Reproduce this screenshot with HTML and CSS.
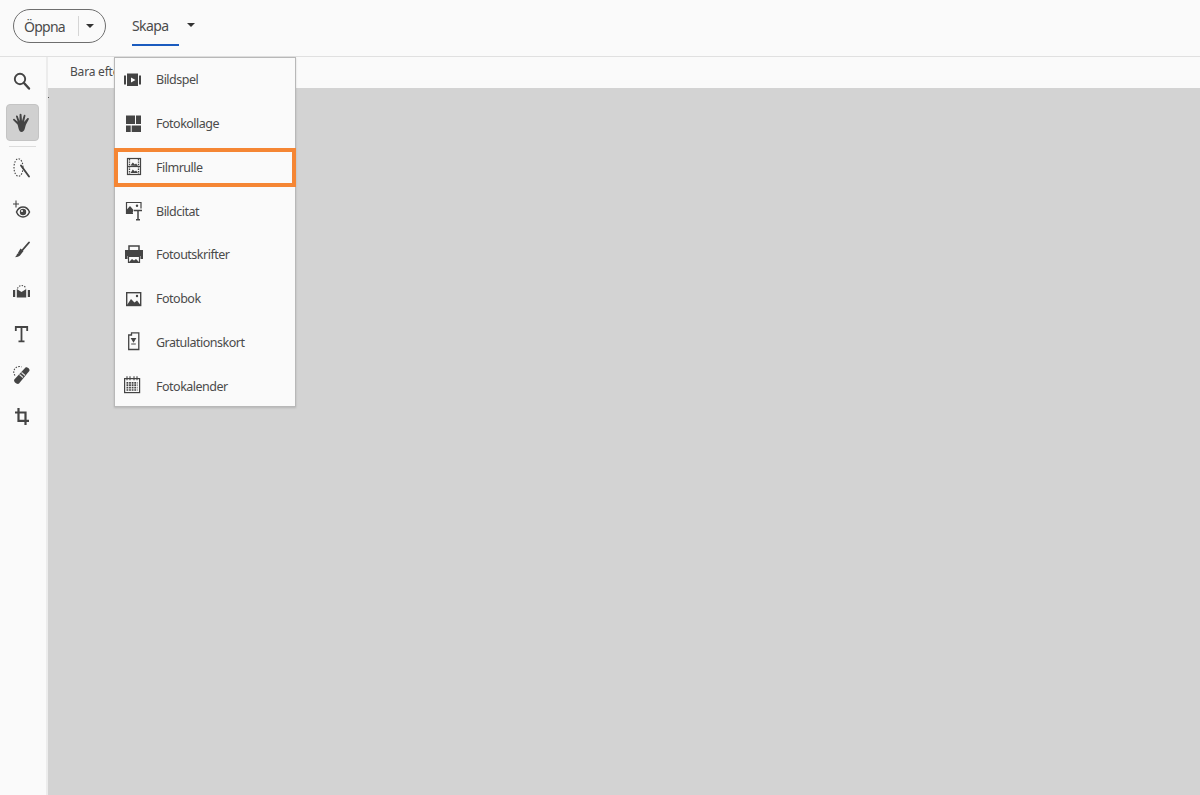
FILE: index.html
```html
<!DOCTYPE html>
<html lang="sv">
<head>
<meta charset="utf-8">
<title>Skapa</title>
<link rel="stylesheet" href="styles.css">
</head>
<body>
<header class="topbar">
  <div class="open-btn"><span class="open-label">Öppna</span><span class="open-sep"></span><span class="caret"></span></div>
  <div class="create-tab"><span class="create-label">Skapa</span></div>
  <span class="caret create-caret"></span>
</header>
<div class="main">
  <nav class="rail">
    <div class="tool"><svg width="20" height="20" viewBox="0 0 20 20"><circle cx="8" cy="8" r="5.2" fill="none" stroke="#444" stroke-width="1.900"/><path d="M12 12L17 17.500" stroke="#444" stroke-width="2.400" stroke-linecap="round"/></svg></div>
    <div class="tool tool-active"><svg width="20" height="20" viewBox="0 0 20 20"><path d="M5.500 11.500L1.300 7.300c-.8-.9.300-2 1.200-1.300l3.200 2.800L4 3.500c-.3-1.200 1.300-1.600 1.700-.4L7.500 8 7.600 1.600c0-1.300 1.800-1.300 1.900 0L10 8l1.700-5.600c.4-1.200 2-.8 1.700.5L12 9l3.300-3.700c.8-.9 2.100.1 1.400 1.100L14 11.500c-1 2-1 7.500-4.500 7.500-2.800 0-3-5-4-7.500z" fill="#444"/></svg></div>
    <div class="rail-sep"></div>
    <div class="tool"><svg width="20" height="20" viewBox="0 0 20 20"><ellipse cx="6.500" cy="9.500" rx="4.500" ry="8.800" fill="none" stroke="#444" stroke-width="1.100" stroke-dasharray="1.500 1.400"/><path d="M9 7.500L17 18.500" stroke="#444" stroke-width="1.900" stroke-linecap="round"/></svg></div>
    <div class="tool"><svg width="20" height="20" viewBox="0 0 20 20"><path d="M4 .5v7M1 4h6" stroke="#444" stroke-width="1.100"/><path d="M4.500 12C6 8.500 8.500 7 11 7s5 1.500 6.500 5c-1.500 3.500-4 5-6.500 5s-5-1.500-6.500-5z" fill="none" stroke="#444" stroke-width="1.500"/><circle cx="11" cy="12" r="3.200" fill="#444"/><circle cx="10" cy="11" r="1" fill="#fff"/></svg></div>
    <div class="tool"><svg width="20" height="20" viewBox="0 0 20 20"><path d="M17 1.500L10.500 9" stroke="#444" stroke-width="1.900" stroke-linecap="round"/><path d="M8.500 7.500l3 2.500-3.500 4.500c-1.200 1.100-3 1.600-4.800 1.700l1-1.700.8-.2-.4-.6 1-1.300.8 0-.4-.7z" fill="#444"/></svg></div>
    <div class="tool"><svg width="20" height="20" viewBox="0 0 20 20"><path d="M5.500 5.500a4.500 4.500 0 0 1 8.500 0" fill="none" stroke="#444" stroke-width="1.100" stroke-dasharray="1.400 1.300"/><path d="M1 7h2.200v7H1zM15.800 7H18v7h-2.200zM4.800 6l4.700 3L14.200 6v8.500H4.800z" fill="#444"/></svg></div>
    <div class="tool"><svg width="20" height="20" viewBox="0 0 20 20"><path d="M3.800 7V3h11.400v4M9.500 3v14M6.500 17.300h6" fill="none" stroke="#444" stroke-width="1.800"/></svg></div>
    <div class="tool"><svg width="20" height="20" viewBox="0 0 20 20"><path d="M3 9.500A5.500 5.500 0 0 1 9.500 1" fill="none" stroke="#444" stroke-width="1.100" stroke-dasharray="1.500 1.300"/><path d="M13.500 1.500c1.500-1.200 5 1.800 3.800 3.500L7 17.500c-1.500 1.500-6-1.500-4.700-4z" fill="#444"/><path d="M7.500 8.500l3.500 3M9.500 6.500l3.500 3" stroke="#ddd" stroke-width="1.200"/></svg></div>
    <div class="tool"><svg width="20" height="20" viewBox="0 0 20 20"><path d="M6.500 1v12.800H17M3 5.500h10.500V18" fill="none" stroke="#444" stroke-width="2.200"/></svg></div>
  </nav>
  <section class="work">
    <div class="subbar"><span class="subbar-text">Bara efter</span></div>
    <div class="canvas"></div>
  </section>
</div>
<span class="speck"></span>
<div class="menu">
  <div class="menu-item"><span class="menu-icon"><svg width="20" height="20" viewBox="0 0 20 20"><path d="M1 5.500h2v9H1zM16 5.500h2v9h-2zM4 3.500h11v12.500H4z" fill="#444"/><path d="M8 7.500l4.500 2.500L8 12.500z" fill="#fff"/></svg></span><span class="menu-label">Bildspel</span></div>
  <div class="menu-item"><span class="menu-icon"><svg width="20" height="20" viewBox="0 0 20 20"><path d="M3 1.500h9V10H3zM13 1.500h5V10h-5zM3 11.500h4.700V18H3zM8.700 11.500H18V18H8.700z" fill="#444"/></svg></span><span class="menu-label">Fotokollage</span></div>
  <div class="menu-item"><span class="menu-icon"><svg width="20" height="20" viewBox="0 0 20 20"><rect x="4.500" y="1.500" width="13" height="16" fill="none" stroke="#444" stroke-width="1.200"/><path d="M6.500 2v15M15.500 2v15" stroke="#444" stroke-width="1.300" stroke-dasharray="1.400 1"/><path d="M4.500 9.500h13" stroke="#444" stroke-width="1.200"/><path d="M7.500 8.500l2.300-3 2 2 1.300-1 1.500 2v.500zM7.500 16l2.300-3.500 2 2 1.300-1 1.500 2v.500z" fill="#444"/></svg></span><span class="menu-label">Filmrulle</span></div>
  <div class="menu-item"><span class="menu-icon"><svg width="20" height="20" viewBox="0 0 20 20"><path d="M10 12.500H3.500V1.500H18v6" fill="none" stroke="#444" stroke-width="1.200"/><path d="M3.500 12.500V9L7 5l3.500 4-1 3.500z" fill="#444"/><circle cx="14" cy="4.800" r="1.200" fill="#444"/><path d="M11 9.500h8M15 9.500v9M13 18.800h4" stroke="#444" stroke-width="1.500" fill="none"/></svg></span><span class="menu-label">Bildcitat</span></div>
  <div class="menu-item"><span class="menu-icon"><svg width="20" height="20" viewBox="0 0 20 20"><path d="M6 5V1h10v4" fill="none" stroke="#444" stroke-width="1.500"/><path d="M2 5h18v9h-2.500v-3h-13v3H2z" fill="#444"/><path d="M5.500 11.500h11v6h-11z" fill="none" stroke="#444" stroke-width="1.200"/><path d="M5.500 17.500l3.500-3.500 2 1.500 2-1.500 3.500 3.500z" fill="#444"/></svg></span><span class="menu-label">Fotoutskrifter</span></div>
  <div class="menu-item"><span class="menu-icon"><svg width="20" height="20" viewBox="0 0 20 20"><rect x="3.700" y="3.700" width="14" height="12.800" fill="none" stroke="#444" stroke-width="1.400"/><path d="M4 16l4-6 3.500 3.500 2.500-2 3.500 4.500z" fill="#444"/><circle cx="14" cy="7" r="1.200" fill="#444"/></svg></span><span class="menu-label">Fotobok</span></div>
  <div class="menu-item"><span class="menu-icon"><svg width="20" height="20" viewBox="0 0 20 20"><path d="M5.700 3H8.500V.8h7.300V17.500H5.700z" fill="none" stroke="#444" stroke-width="1.300"/><path d="M8.700 6.500h3.600l-1.800 3zM8.200 12h4.600" fill="#444" stroke="#444" stroke-width="1.200"/></svg></span><span class="menu-label">Gratulationskort</span></div>
  <div class="menu-item"><span class="menu-icon"><svg width="20" height="20" viewBox="0 0 20 20"><rect x="1.600" y="2.600" width="15" height="14" fill="none" stroke="#444" stroke-width="1.200"/><path d="M4 .3v4M7 .3v4M11 .3v4M14 .3v4" stroke="#444" stroke-width="1.100"/><path d="M3.500 6.800h11M3.500 9.200h11M3.500 11.600h11M3.500 14h11" stroke="#444" stroke-width="1.700" stroke-dasharray="1.800 .8"/></svg></span><span class="menu-label">Fotokalender</span></div>
</div>
<div class="highlight"></div>
</body>
</html>
```
FILE: styles.css
```css
* { box-sizing: border-box; }
html, body { margin: 0; height: 795px; overflow: hidden; }
body { background: #fafafa; font-family: "Noto Sans", "Open Sans", sans-serif; color: #444; display: flex; flex-direction: column; }
.topbar { height: 57px; flex: none; display: flex; align-items: flex-start; padding-left: 13px; background: #fafafa; border-bottom: 1px solid #e0e0e0; }
.open-btn { margin-top: 9px; width: 93px; height: 34px; border: 1px solid #6e6e6e; border-radius: 17px; display: flex; align-items: center; padding-left: 10px; }
.open-label { font-size: 14px; letter-spacing: -.75px; width: 54px; color: #4b4b4b; }
.open-sep { width: 1px; height: 20px; background: #d5d5d5; margin-right: 7px; }
.caret { width: 0; height: 0; border-left: 4px solid transparent; border-right: 4px solid transparent; border-top: 4px solid #333; }
.create-tab { margin-left: 26px; width: 47px; height: 46px; border-bottom: 2px solid #1a5bbf; padding-top: 16px; }
.create-label { font-size: 14px; letter-spacing: -.6px; color: #4b4b4b; display: block; line-height: 20px; }
.create-caret { margin: 23px 0 0 8px; }
.main { flex: 1; display: flex; min-height: 0; }
.rail { width: 48px; flex: none; border-right: 2px solid #ececec; background: #fafafa; display: flex; flex-direction: column; align-items: center; padding: 6.5px 2px 0 0; }
.tool { width: 33px; height: 35px; display: flex; align-items: center; justify-content: center; margin-bottom: 6.5px; border-radius: 4px; flex: none; }
.tool-active { background: #d0d0d0; border: 1px solid #c4c4c4; height: 37px; margin-top: -1px; margin-bottom: 5px; }
.rail-sep { width: 27px; height: 1px; background: #dcdcdc; margin-bottom: 3.5px; flex: none; }
.work { flex: 1; display: flex; flex-direction: column; }
.subbar { height: 31px; background: #fafafa; padding: 5px 0 0 22px; font-size: 12px; letter-spacing: -.2px; color: #4b4b4b; line-height: 20px; flex: none; }
.canvas { flex: 1; background: #d3d3d3; }
.speck { position: absolute; left: 48px; top: 97px; width: 1px; height: 1px; background: #555; }
.menu { position: absolute; left: 114px; top: 57px; width: 182px; height: 350px; background: #fafafa; border: 1px solid #b8b8b8; box-shadow: 0 1px 2px rgba(0,0,0,.15); display: flex; flex-direction: column; }
.menu-item { height: 43.75px; display: flex; align-items: center; flex: none; padding-left: 8px; }
.menu-icon { width: 20px; height: 20px; margin-right: 13px; display: flex; }
.menu-label { font-size: 12.5px; letter-spacing: -.5px; color: #4b4b4b; }
.highlight { position: absolute; left: 114px; top: 148px; width: 182px; height: 39px; border: 4px solid #f58634; }
```
